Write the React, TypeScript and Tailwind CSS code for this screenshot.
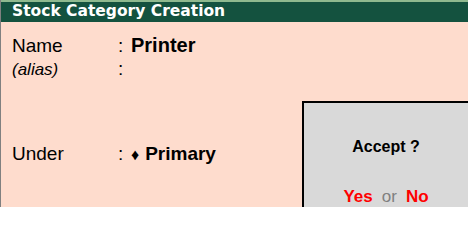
import * as React from "react";

function Field({
  label,
  value,
  italic,
  className,
}: {
  label: string;
  value?: React.ReactNode;
  italic?: boolean;
  className?: string;
}) {
  return (
    <div className={`flex items-baseline ${className ?? ""}`}>
      <span className={`w-[106px] ${italic ? "italic text-[17px]" : "text-[19px]"}`}>{label}</span>
      <span className="w-[13px] text-[19px]">:</span>
      {value}
    </div>
  );
}

export default function App() {
  return (
    <div className="relative h-[207px] w-[468px] overflow-hidden border-l border-[#808080] bg-[#fedccd] font-['Liberation_Sans',Arial,sans-serif] text-black">
      <div className="h-[2px] bg-[#8fb98f]" />
      <div className="flex h-[20px] items-center bg-[#14523f] pl-[11px] font-['DejaVu_Sans',Verdana,sans-serif] text-[15.5px] font-bold leading-none text-white">
        Stock Category Creation
      </div>

      <div className="flex flex-col pl-[11px]">
        <Field
          className="mt-[12px] leading-[22px]"
          label="Name"
          value={<span className="text-[20px] font-bold">Printer</span>}
        />
        <Field className="mt-[3px] leading-[18px]" label="(alias)" italic />
        <Field
          className="mt-[64px] leading-[22px]"
          label="Under"
          value={
            <span className="text-[19px] font-bold">
              <span className="mr-[6px] text-[16px]">♦</span>Primary
            </span>
          }
        />
      </div>

      <div className="absolute left-[301px] top-[101px] flex h-[110px] w-[170px] flex-col items-center border-2 border-black bg-[#d9d9d9]">
        <div className="mt-[32px] pr-[2px] text-[16px] font-bold">Accept ?</div>
        <div className="mt-[25px] flex items-baseline gap-[9px] pr-[2px] text-[17px]">
          <span className="font-bold text-[#ff0000]">Yes</span>
          <span className="text-[#808080]">or</span>
          <span className="font-bold text-[#ff0000]">No</span>
        </div>
      </div>
    </div>
  );
}
